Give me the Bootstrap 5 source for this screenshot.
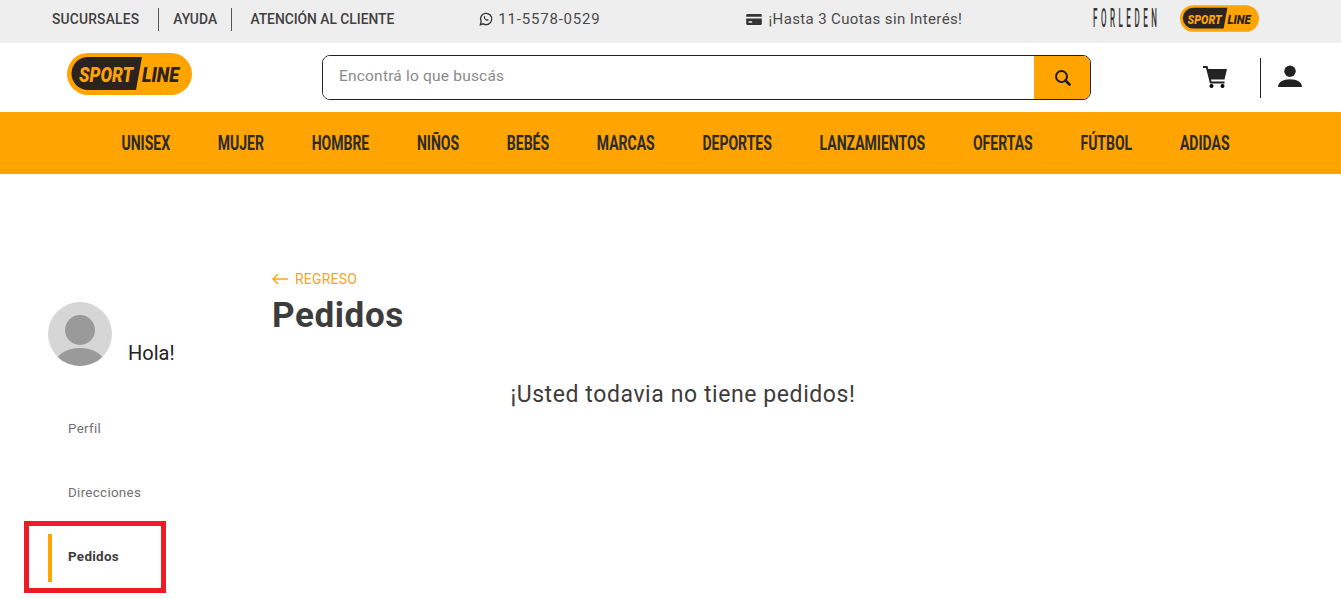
<!DOCTYPE html>
<html lang="es">
<head>
  <meta charset="UTF-8" />
  <meta name="viewport" content="width=device-width, initial-scale=1.0" />
  <title>Pedidos | Sport Line</title>
  <link href="https://cdn.jsdelivr.net/npm/bootstrap@5.3.0/dist/css/bootstrap.min.css" rel="stylesheet">
  <style>
    body {
      background: #fff;
      color: #3c3c3c;
      font-family: "Roboto", "Liberation Sans", sans-serif;
      overflow-x: hidden;
    }
    .top-strip {
      height: 43px;
      background: #eee;
      padding: 0 0 5px 52px;
      color: #3f3f3f;
    }
    .top-link {
      font-size: 13.8px;
      font-weight: 500;
      color: #3f3f3f;
      text-decoration: none;
    }
    .top-link.wide-txt { letter-spacing: .2px; }
    .top-sep {
      width: 1px;
      height: 23px;
      background: #555;
    }
    .top-info {
      font-size: 15px;
      letter-spacing: .37px;
      color: #4a4a4a;
    }
    .phone-txt { letter-spacing: .8px; }
    .forleden-wrap {
      width: 64px;
      height: 22px;
    }
    .forleden {
      display: block;
      font-size: 25px;
      font-weight: 500;
      letter-spacing: 11px;
      line-height: 22px;
      color: #333;
      white-space: nowrap;
      transform: scaleX(.32);
      transform-origin: left center;
    }
    .small-logo {
      margin: 0 0 2px 23px;
    }
    .main-head {
      height: 69px;
    }
    .head-logo {
      margin: 0 0 8px 67px;
    }
    .search-box {
      width: 769px;
      height: 45px;
      border: 1px solid #222;
      border-radius: 8px;
      overflow: hidden;
    }
    .search-box input {
      border: 0;
      outline: 0;
      padding: 0 16px 2px;
      font-size: 15.5px;
      letter-spacing: .2px;
    }
    .search-box input::placeholder { color: #8a8a8a; }
    .search-go {
      width: 56px;
      background: #ffa400;
      border: 0;
    }
    .head-sep {
      width: 1px;
      height: 40px;
      background: #222;
    }
    .cat-bar {
      height: 62px;
      padding-left: 9px;
      background: #ffa400;
      overflow: hidden;
    }
    .cat-row {
      gap: 68.2px;
      flex-shrink: 0;
      transform: scaleX(.7);
    }
    .cat-row a {
      font-size: 20px;
      font-weight: 700;
      color: #2b2b2b;
      text-decoration: none;
      white-space: nowrap;
    }
    .page-body {
      padding-top: 96px;
    }
    .side-col {
      width: 272px;
      padding: 32px 0 0 48px;
    }
    .avatar-disc {
      width: 64px;
      height: 64px;
    }
    .hola-txt {
      font-size: 20px;
      color: #222;
      margin: 0 0 0 16px;
      line-height: 1;
      padding-bottom: 3px;
    }
    .side-menu {
      margin-top: 31px;
    }
    .side-menu a {
      display: flex;
      align-items: center;
      height: 64px;
      padding-left: 20px;
      font-size: 13.4px;
      letter-spacing: .3px;
      color: #6f6f6f;
      text-decoration: none;
    }
    .side-menu a.on {
      position: relative;
      font-weight: 700;
      color: #3c3c3c;
    }
    .side-menu a.on::before {
      content: "";
      position: absolute;
      left: 0;
      top: 9px;
      bottom: 7px;
      width: 4px;
      background: #ffa400;
    }
    .red-mark {
      position: absolute;
      left: 24px;
      top: 521px;
      width: 142px;
      height: 72px;
      border: 5px solid #ed1c24;
      pointer-events: none;
    }
    .content-col {
      width: 822px;
    }
    .back-link {
      font-size: 14px;
      letter-spacing: .2px;
      color: #f5a623;
      text-decoration: none;
      height: 18px;
    }
    .back-link svg { margin-right: 7px; }
    .page-title {
      font-size: 35px;
      font-weight: 700;
      letter-spacing: .6px;
      color: #3c3c3c;
      margin: 6px 0 0;
      line-height: 44px;
    }
    .empty-msg {
      font-size: 23px;
      letter-spacing: .58px;
      color: #3c3c3c;
      margin: 41px 0 0;
      line-height: 32px;
    }
  </style>
</head>
<body>
  <!-- top strip -->
  <div class="top-strip d-flex align-items-center">
    <a class="top-link wide-txt" href="#">SUCURSALES</a>
    <span class="top-sep" style="margin:0 14px 0 19px"></span>
    <a class="top-link wide-txt" href="#">AYUDA</a>
    <span class="top-sep" style="margin:0 18px 0 14px"></span>
    <a class="top-link" href="#">ATENCIÓN AL CLIENTE</a>
    <div class="top-info d-flex align-items-center" style="margin-left:85px">
      <svg style="margin-right:5px" width="14" height="14" viewBox="0 0 16 16" fill="none" stroke="#333" stroke-width="1.500"><path d="M1.500 14.500l1-3.600A6.400 6.400 0 1 1 5 13.500z"/><path d="M5.600 5c.5-.8 1.100-.7 1.400.1.300.7.200.9-.3 1.400.4.900 1.200 1.700 2.200 2.200.5-.5.800-.6 1.400-.3.800.4.900.9.200 1.400-1.700 1-5.600-2-4.900-4.800z" fill="#333" stroke="none"/></svg>
      <span class="phone-txt">11-5578-0529</span>
    </div>
    <div class="top-info d-flex align-items-center" style="margin-left:145px">
      <svg style="margin-right:7px" width="16" height="11" viewBox="0 0 17 12"><path fill="#333" d="M1.500 0h14A1.500 1.500 0 0 1 17 1.500V3H0V1.500A1.500 1.500 0 0 1 1.500 0zM0 5h17v5.500a1.500 1.500 0 0 1-1.500 1.500h-14A1.500 1.500 0 0 1 0 10.500zm2.500 3v1.500h4V8z"/></svg>
      <span>¡Hasta 3 Cuotas sin Interés!</span>
    </div>
    <div class="forleden-wrap" style="margin-left:131px"><span class="forleden">FORLEDEN</span></div>
    <svg class="small-logo" width="79" height="27" viewBox="0 0 125 42">
      <rect width="125" height="42" rx="21" fill="#ffa400"/>
      <path d="M21 4h54l-6 33H21a16.500 16.500 0 0 1 0-33z" fill="#2b2320"/>
      <text x="12" y="29" font-family="Roboto, sans-serif" font-size="21" font-weight="900" font-style="italic" fill="#ffa400" textLength="54" lengthAdjust="spacingAndGlyphs">SPORT</text>
      <text x="75" y="29" font-family="Roboto, sans-serif" font-size="21" font-weight="900" font-style="italic" fill="#2b2320" textLength="37" lengthAdjust="spacingAndGlyphs">LINE</text>
    </svg>
  </div>

  <!-- logo, search, icons -->
  <div class="main-head d-flex align-items-center">
    <svg class="head-logo" width="125" height="42" viewBox="0 0 125 42">
      <rect width="125" height="42" rx="21" fill="#ffa400"/>
      <path d="M21 4h54l-6 33H21a16.500 16.500 0 0 1 0-33z" fill="#2b2320"/>
      <text x="12" y="29" font-family="Roboto, sans-serif" font-size="21" font-weight="900" font-style="italic" fill="#ffa400" textLength="54" lengthAdjust="spacingAndGlyphs">SPORT</text>
      <text x="75" y="29" font-family="Roboto, sans-serif" font-size="21" font-weight="900" font-style="italic" fill="#2b2320" textLength="37" lengthAdjust="spacingAndGlyphs">LINE</text>
    </svg>
    <div class="search-box d-flex" style="margin-left:130px">
      <input class="flex-grow-1" type="text" placeholder="Encontrá lo que buscás">
      <button class="search-go d-flex align-items-center justify-content-center" type="button" aria-label="Buscar">
        <svg width="17" height="17" viewBox="0 0 17 17" fill="none" stroke="#1c1c1c" stroke-width="2"><circle cx="7.500" cy="7.500" r="5.500"/><path d="M11.500 11.500l4 4" stroke-width="2.600" stroke-linecap="round"/></svg>
      </button>
    </div>
    <svg style="margin:0 0 2px 112px" width="24" height="22" viewBox="0 0 24 22"><path fill="#222" d="M0 0h4.500l.8 3H24l-2.500 10.500H8l.5 2h13v2H7L3 2H0z"/><circle cx="8.500" cy="20" r="2"/><circle cx="19.500" cy="20" r="2"/></svg>
    <span class="head-sep" style="margin-left:33px"></span>
    <svg style="margin:0 0 3px 17px" width="24" height="22" viewBox="0 0 25 23"><circle cx="12.500" cy="6.500" r="6" fill="#222"/><path fill="#222" d="M0 23c0-5 5-8 12.500-8S25 18 25 23z"/></svg>
  </div>

  <!-- categories -->
  <nav class="cat-bar d-flex align-items-center justify-content-center">
    <div class="cat-row d-flex">
      <a href="#">UNISEX</a>
      <a href="#">MUJER</a>
      <a href="#">HOMBRE</a>
      <a href="#">NIÑOS</a>
      <a href="#">BEBÉS</a>
      <a href="#">MARCAS</a>
      <a href="#">DEPORTES</a>
      <a href="#">LANZAMIENTOS</a>
      <a href="#">OFERTAS</a>
      <a href="#">FÚTBOL</a>
      <a href="#">ADIDAS</a>
    </div>
  </nav>

  <div class="page-body d-flex">
    <aside class="side-col flex-shrink-0">
      <div class="d-flex align-items-end">
        <svg class="avatar-disc" viewBox="0 0 64 64">
          <defs><clipPath id="disc"><circle cx="32" cy="32" r="32"/></clipPath></defs>
          <circle cx="32" cy="32" r="32" fill="#d6d6d6"/>
          <circle cx="32" cy="28" r="15" fill="#9a9a9a"/>
          <ellipse cx="32" cy="62" rx="25" ry="16" fill="#9a9a9a" clip-path="url(#disc)"/>
        </svg>
        <p class="hola-txt">Hola!</p>
      </div>
      <div class="side-menu">
        <a href="#">Perfil</a>
        <a href="#">Direcciones</a>
        <a class="on" href="#">Pedidos</a>
      </div>
    </aside>
    <main class="content-col">
      <a class="back-link d-flex align-items-center" href="#">
        <svg width="16" height="12" viewBox="0 0 16 12" fill="none" stroke="#f5a623" stroke-width="1.500"><path d="M16 6H1M6 1L1 6l5 5"/></svg>
        REGRESO
      </a>
      <h1 class="page-title">Pedidos</h1>
      <p class="empty-msg text-center">¡Usted todavia no tiene pedidos!</p>
    </main>
  </div>

  <div class="red-mark"></div>

  <script src="https://cdn.jsdelivr.net/npm/bootstrap@5.3.0/dist/js/bootstrap.bundle.min.js"></script>
</body>
</html>
